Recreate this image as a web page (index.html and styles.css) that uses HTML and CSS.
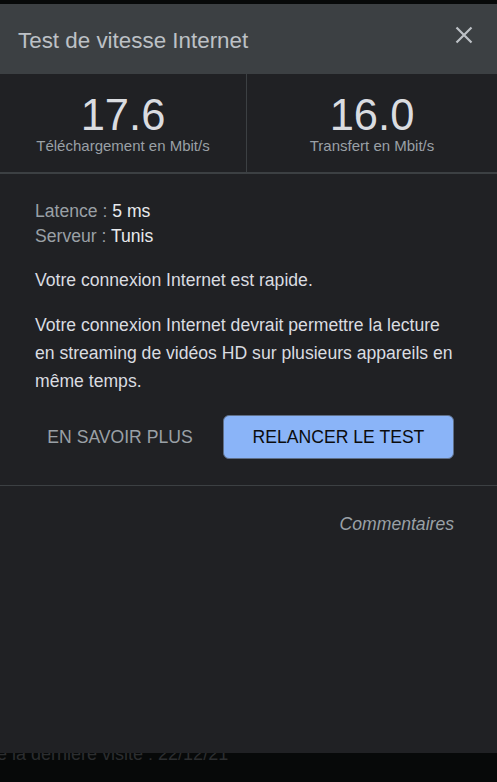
FILE: index.html
```html
<!DOCTYPE html>
<html lang="fr">
<head>
<meta charset="utf-8">
<title>Test de vitesse Internet</title>
<link rel="stylesheet" href="styles.css">
</head>
<body>
<div class="page">
  <p class="page-line">de la dernière visite : 22/12/21</p>
</div>
<div class="dialog" role="dialog">
  <header class="dlg-header">
    <h1 class="dlg-title">Test de vitesse Internet</h1>
    <button class="close" aria-label="Fermer">
      <svg width="18" height="18" viewBox="0 0 18 18"><path d="M1.5 1.5 L16.5 16.5 M16.5 1.5 L1.5 16.5" stroke="#bdc1c6" stroke-width="2.2" fill="none"/></svg>
    </button>
  </header>
  <section class="metrics">
    <div class="metric metric-left">
      <div class="metric-value">17.6</div>
      <div class="metric-label">Téléchargement en Mbit/s</div>
    </div>
    <div class="metric">
      <div class="metric-value">16.0</div>
      <div class="metric-label">Transfert en Mbit/s</div>
    </div>
  </section>
  <section class="details">
    <div class="info">
      <div><span class="info-key">Latence : </span><span class="info-val">5 ms</span></div>
      <div><span class="info-key">Serveur : </span><span class="info-val">Tunis</span></div>
    </div>
    <p class="para">Votre connexion Internet est rapide.</p>
    <p class="para">Votre connexion Internet devrait permettre la lecture en streaming de vidéos HD sur plusieurs appareils en même temps.</p>
    <div class="actions">
      <button class="btn-text">EN SAVOIR PLUS</button>
      <button class="btn-primary">RELANCER LE TEST</button>
    </div>
  </section>
  <footer class="dlg-footer">
    <span class="feedback">Commentaires</span>
  </footer>
</div>
</body>
</html>
```

FILE: styles.css
```css
html, body {
  margin: 0;
  padding: 0;
}
body {
  background: #070909;
  width: 497px;
  height: 782px;
  overflow: hidden;
  position: relative;
  font-family: Arial, "Liberation Sans", sans-serif;
}
.page {
  padding-top: 742px;
}
.page-line {
  margin: 0 0 0 -13px;
  font-size: 18px;
  line-height: 24px;
  color: #2c2e30;
  white-space: nowrap;
}
.dialog {
  position: absolute;
  top: 4px;
  left: 0;
  right: 0;
  height: 749px;
  background: #202124;
  display: flex;
  flex-direction: column;
}
.dlg-header {
  height: 70px;
  background: #3c4043;
  display: flex;
  align-items: center;
  justify-content: space-between;
  padding: 0 24px 0 18px;
}
.dlg-title {
  margin: 0;
  font-weight: normal;
  font-size: 22.4px;
  color: #bdc1c6;
  padding-top: 4px;
}
.close {
  background: none;
  border: 0;
  padding: 0;
  width: 18px;
  height: 18px;
  margin-top: -8px;
  display: flex;
}
.metrics {
  display: grid;
  grid-template-columns: 247px 1fr;
  border-bottom: 2px solid #3c4043;
  height: 98px;
}
.metric {
  padding-top: 19px;
  text-align: center;
}
.metric-left {
  border-right: 1px solid #3c4043;
}
.metric-value {
  font-size: 43.5px;
  line-height: 44px;
  color: #dadce0;
}
.metric-label {
  font-size: 15px;
  line-height: 18px;
  color: #9aa0a6;
}
.details {
  padding: 25px 43px 26px 35px;
  border-bottom: 1px solid #3c4043;
}
.info {
  font-size: 17.6px;
  line-height: 25px;
}
.info-key {
  color: #9aa0a6;
}
.info-val {
  color: #e8eaed;
}
.para {
  margin: 17px 0 0;
  font-size: 17.6px;
  line-height: 28px;
  color: #dadce0;
}
.actions {
  display: flex;
  gap: 18px;
  margin-top: 20px;
}
.btn-text {
  width: 170px;
  height: 44px;
  background: none;
  border: 0;
  font-family: inherit;
  font-size: 17.6px;
  color: #9aa0a6;
  padding: 0;
}
.btn-primary {
  flex: 1;
  height: 44px;
  background: #8ab4f8;
  border: 1px solid #5f6f88;
  border-radius: 6px;
  font-family: inherit;
  font-size: 17.6px;
  color: #0b0c0e;
  padding: 0;
}
.dlg-footer {
  padding: 28px 43px 0 0;
  text-align: right;
}
.feedback {
  font-style: italic;
  font-size: 17.6px;
  line-height: 20px;
  color: #9aa0a6;
}
```
